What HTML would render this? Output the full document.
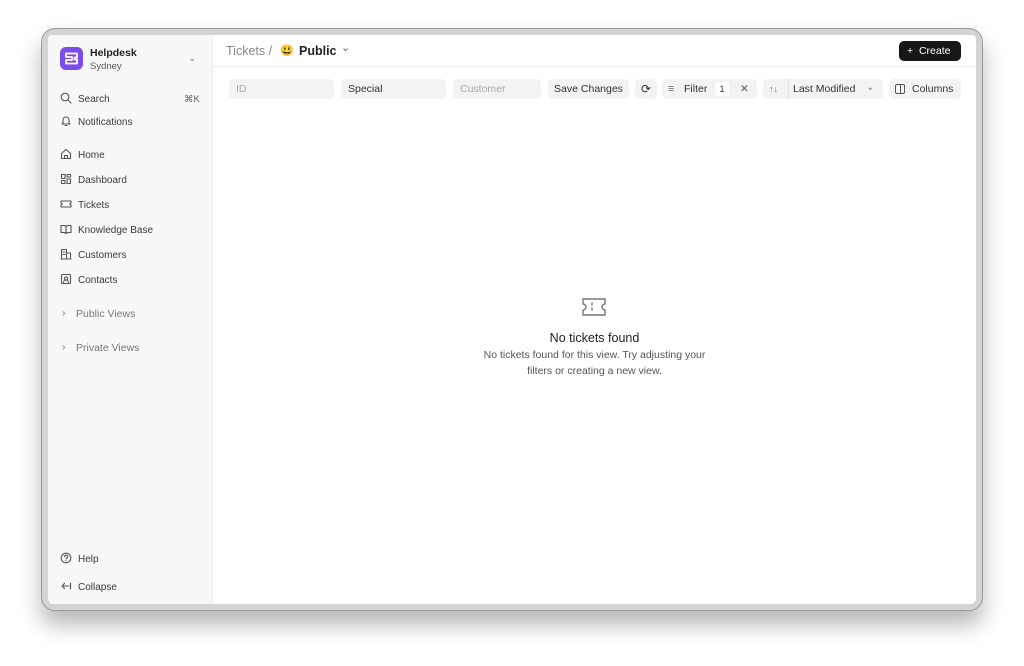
<!DOCTYPE html>
<html><head><meta charset="utf-8"><style>
*{box-sizing:border-box;margin:0;padding:0}
body{width:1024px;height:666px;background:#fff;font-family:"Liberation Sans",sans-serif;position:relative;overflow:hidden;color:#333}
.frame{position:absolute;left:41px;top:28px;width:942px;height:583px;border-radius:14px;background:#d4d4d4;border:1px solid #9a9a9a;box-shadow:0 14px 22px rgba(0,0,0,.28)}
.win{position:absolute;left:48px;top:35px;width:928px;height:569px;background:#fff;border-radius:4px 4px 6px 6px;overflow:hidden}
.side{position:absolute;left:0;top:0;width:165px;height:100%;background:#f8f8f8;border-right:1px solid #ececec}
.side .t{margin-top:2px}
.logo{position:absolute;left:12px;top:12px;width:23px;height:23px;border-radius:6px;background:#7c4dee}
.t{position:absolute;font-size:10px;color:#3a3a3a;white-space:nowrap;line-height:12px}
.ic{position:absolute;width:12px;height:12px}
.ic svg{width:12px;height:12px;fill:none;stroke:#555;stroke-width:1.1;stroke-linecap:round;stroke-linejoin:round;display:block}
.main{position:absolute;left:165px;top:0;right:0;height:100%}
.hdr{position:absolute;left:0;top:0;right:0;height:32px;border-bottom:1px solid #ededed}
.btn{position:absolute;background:#f3f3f3;border-radius:5px;height:20px;top:44px;font-size:10.5px;color:#333;line-height:20px}
.inp{position:absolute;background:#f3f3f3;border-radius:5px;height:20px;top:44px;font-size:10.5px;line-height:20px;padding-left:7px}
</style></head><body>
<div class="frame"></div>
<div class="win">
 <div class="side">
  <div class="logo"><svg width="23" height="23" viewBox="0 0 23 23"><path d="M6 6.5h11v4h-2.5v2H17v4H6v-3.5h6v-3H6z" fill="none" stroke="#fff" stroke-width="1.8" stroke-linejoin="round"/></svg></div>
  <div class="t" style="left:42px;top:10px;font-weight:bold;font-size:10.5px;color:#222">Helpdesk</div>
  <div class="t" style="left:42px;top:24px;color:#555;font-size:9.5px">Sydney</div>
  <div class="t" style="left:140px;top:16px;color:#888">⌄</div>
  <div class="ic" style="left:12px;top:57px"><svg viewBox="0 0 12 12"><circle cx="5" cy="5" r="3.8"/><path d="M8 8l3 3"/></svg></div>
  <div class="t" style="left:30px;top:57px">Search</div>
  <div class="t" style="left:136px;top:57px;color:#666;font-size:9.5px">⌘K</div>
  <div class="ic" style="left:12px;top:80px"><svg viewBox="0 0 12 12"><path d="M3 8V5a3 3 0 016 0v3l1 1H2zM5 10.5h2"/></svg></div>
  <div class="t" style="left:30px;top:80px">Notifications</div>
  <div class="ic" style="left:12px;top:113px"><svg viewBox="0 0 12 12"><path d="M1.5 5.5L6 1.5l4.5 4v5h-9zM4.5 10.5v-3h3v3"/></svg></div>
  <div class="t" style="left:30px;top:113px">Home</div>
  <div class="ic" style="left:12px;top:138px"><svg viewBox="0 0 12 12"><rect x="1.5" y="1.5" width="3.5" height="4"/><rect x="7" y="1.5" width="3.5" height="2.5"/><rect x="1.5" y="7.5" width="3.5" height="3"/><rect x="7" y="6" width="3.5" height="4.5"/></svg></div>
  <div class="t" style="left:30px;top:138px">Dashboard</div>
  <div class="ic" style="left:12px;top:163px"><svg viewBox="0 0 12 12"><path d="M1 3h10v2a1 1 0 000 2v2H1V7a1 1 0 000-2z"/></svg></div>
  <div class="t" style="left:30px;top:163px">Tickets</div>
  <div class="ic" style="left:12px;top:188px"><svg viewBox="0 0 12 12"><path d="M1 2.5h3.5L6 3.5l1.5-1H11v7H7.5L6 10.5 4.5 9.5H1zM6 3.5v7"/></svg></div>
  <div class="t" style="left:30px;top:188px">Knowledge Base</div>
  <div class="ic" style="left:12px;top:213px"><svg viewBox="0 0 12 12"><path d="M1.5 11V1.5h5V11M6.5 5h4v6M1 11h10M3 4h2M3 6.5h2"/></svg></div>
  <div class="t" style="left:30px;top:213px">Customers</div>
  <div class="ic" style="left:12px;top:238px"><svg viewBox="0 0 12 12"><rect x="1.5" y="1.5" width="9" height="9" rx="1"/><circle cx="6" cy="5.5" r="1.6"/><path d="M3.5 9.5a2.5 2.5 0 015 0"/></svg></div>
  <div class="t" style="left:30px;top:238px">Contacts</div>
  <div class="t" style="left:14px;top:270px;color:#777;font-size:10.5px">›</div>
  <div class="t" style="left:28px;top:271px;color:#777;font-size:10.5px">Public Views</div>
  <div class="t" style="left:14px;top:304px;color:#777;font-size:10.5px">›</div>
  <div class="t" style="left:28px;top:305px;color:#777;font-size:10.5px">Private Views</div>
  <div class="ic" style="left:12px;top:517px"><svg viewBox="0 0 12 12"><circle cx="6" cy="6" r="4.8"/><path d="M4.6 4.7a1.5 1.5 0 112 1.4c-.4.2-.6.5-.6.9M6 8.6v.1"/></svg></div>
  <div class="t" style="left:30px;top:517px">Help</div>
  <div class="ic" style="left:12px;top:545px"><svg viewBox="0 0 12 12"><path d="M9 6H2M4.5 3.5L2 6l2.5 2.5M10.5 3v6"/></svg></div>
  <div class="t" style="left:30px;top:545px">Collapse</div>
 </div>
 <div class="main">
  <div class="hdr">
   <div class="t" style="left:13px;top:9px;font-size:12.5px;line-height:14px;color:#888">Tickets /</div>
   <div class="t" style="left:67px;top:9px;font-size:11px;line-height:14px">😃</div>
   <div class="t" style="left:86px;top:9px;font-size:12.5px;line-height:14px;color:#222;font-weight:bold">Public</div>
   <div class="t" style="left:128px;top:7px;font-size:11px;color:#666">⌄</div>
   <div style="position:absolute;right:15px;top:6px;width:62px;height:20px;background:#171717;border-radius:5px;color:#fff;font-size:10.5px;line-height:20px;padding-left:8px">+&nbsp; Create</div>
  </div>
  <div class="inp" style="left:16px;width:105px;color:#aaa">ID</div>
  <div class="inp" style="left:128px;width:105px;color:#333">Special</div>
  <div class="inp" style="left:240px;width:88px;color:#aaa">Customer</div>
  <div class="btn" style="left:335px;width:81px;text-align:center">Save Changes</div>
  <div class="btn" style="left:422px;width:22px;text-align:center;font-size:12px">⟳</div>
  <div class="btn" style="left:449px;width:95px;padding-left:22px">Filter <span style="position:absolute;left:53px;top:3px;width:14px;height:14px;background:#fff;border-radius:3px;font-size:9px;line-height:14px;text-align:center">1</span><span style="position:absolute;left:78px;color:#555">✕</span><span style="position:absolute;left:6px;top:0;color:#666">≡</span></div>
  <div class="btn" style="left:550px;width:120px"><span style="position:absolute;left:6px;color:#777;font-size:9px">↑↓</span><span style="position:absolute;left:25px;top:0;width:1px;height:20px;background:#e4e4e4"></span><span style="position:absolute;left:30px">Last Modified</span><span style="position:absolute;left:103px;top:-2px;color:#888">⌄</span></div>
  <div class="btn" style="left:676px;width:72px;padding-left:23px"><span style="position:absolute;left:6px;top:5px;width:10px;height:10px;border:1.1px solid #555;border-radius:2px"></span><span style="position:absolute;left:11px;top:5px;width:1px;height:10px;background:#555"></span>Columns</div>
  <svg style="position:absolute;left:368px;top:262px" width="26" height="20" viewBox="0 0 26 20" fill="none" stroke="#777" stroke-width="1.4"><path d="M2 2h22v5a3 3 0 000 6v5H2v-5a3 3 0 000-6z" stroke-linejoin="round"/><path d="M11 6v2M11 11v2" stroke-linecap="round"/></svg>
  <div class="t" style="left:0;right:0;top:296px;text-align:center;font-size:12.5px;line-height:14px;color:#222">No tickets found</div>
  <div class="t" style="left:0;right:0;top:312px;text-align:center;font-size:10.5px;color:#555;line-height:16px">No tickets found for this view. Try adjusting your<br>filters or creating a new view.</div>
 </div>
</div>
</body></html>
